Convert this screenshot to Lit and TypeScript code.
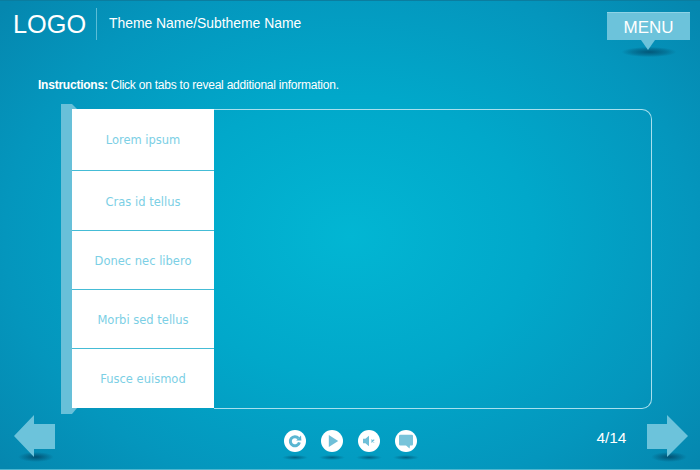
import { LitElement, html, css, svg } from "lit";
import { customElement } from "lit/decorators.js";

const TABS = ["Lorem ipsum", "Cras id tellus", "Donec nec libero", "Morbi sed tellus", "Fusce euismod"];

@customElement("app-root")
export class AppRoot extends LitElement {
  static styles = css`
    :host {
      display: block;
      width: 700px;
      height: 470px;
      font-family: "Liberation Sans", Arial, sans-serif;
      color: #fff;
    }
    .page {
      width: 700px;
      height: 470px;
      box-sizing: border-box;
      overflow: hidden;
      display: flex;
      flex-direction: column;
      background: radial-gradient(ellipse 460px 350px at 350px 235px, #02b6d3 0%, #01a8ca 40%, #0496bd 75%, #0587af 100%);
      border-top: 1px solid #0b7d9f;
      border-bottom: 1px solid #4fb6cf;
    }
    .header {
      height: 60px;
      flex: none;
      display: flex;
      align-items: flex-start;
      padding: 7px 10px 0 13px;
      box-sizing: border-box;
    }
    .logo {
      font-size: 25.3px;
      line-height: 32px;
      width: 83px;
      height: 32px;
      border-right: 1px solid #5cbdd6;
      flex: none;
    }
    .theme {
      font-size: 13.9px;
      line-height: 16px;
      margin: 7px 0 0 12px;
      flex: 1;
    }
    .menu {
      flex: none;
      margin-top: 4px;
      width: 83px;
      height: 28px;
      position: relative;
      background: #6cc3db;
      border-top: 1px solid #8ed3e6;
      box-sizing: border-box;
      text-align: center;
      font-size: 17px;
      line-height: 29px;
    }
    .menu::after {
      content: "";
      position: absolute;
      left: 34px;
      top: 27px;
      border-left: 7.5px solid transparent;
      border-right: 7.5px solid transparent;
      border-top: 10px solid #6cc3db;
    }
    .menu::before {
      content: "";
      position: absolute;
      left: 15px;
      top: 34px;
      width: 54px;
      height: 10px;
      background: radial-gradient(ellipse at center, rgba(0, 50, 80, .6) 0%, rgba(0, 60, 90, .3) 45%, rgba(0, 70, 100, 0) 72%);
    }
    .instructions {
      flex: none;
      margin: 17px 0 0 38px;
      height: 14px;
      font-size: 12px;
      letter-spacing: -0.23px;
      line-height: 14px;
    }
    .stage {
      flex: none;
      margin: 12px 0 0 61px;
      display: flex;
      align-items: flex-start;
      height: 310px;
    }
    .rail {
      flex: none;
      width: 16px;
      height: 310px;
      background: #68c0d9;
      clip-path: polygon(0 0, 11px 0, 16px 5px, 16px 304px, 11px 310px, 0 310px);
    }
    .tabs {
      flex: none;
      position: relative;
      margin: 5px 0 0 -5px;
      width: 142px;
      height: 299px;
      background: #fff;
      display: flex;
      flex-direction: column;
    }
    .panel {
      flex: none;
      margin-top: 5px;
      width: 438px;
      height: 300px;
      box-sizing: border-box;
      border: 1px solid #a8e0ee;
      border-left: none;
      border-radius: 0 10px 10px 0;
    }
    .tab {
      flex: none;
      display: flex;
      align-items: center;
      justify-content: center;
      color: #7ccfe5;
      font-family: "DejaVu Sans", sans-serif;
      font-size: 11.5px;
      border-bottom: 1px solid #45bcd6;
      box-sizing: border-box;
      height: 59px;
      padding-top: 2px;
    }
    .tab:first-child { height: 62px; padding-top: 0; }
    .tab:nth-child(2) { height: 60px; }
    .tab:last-child { border-bottom: none; height: 60px; padding-top: 0; }
    .footer {
      flex: none;
      margin-top: 1px;
      height: 53px;
      display: flex;
      align-items: flex-start;
      padding: 0 12px 0 14px;
      position: relative;
    }
    .arrow { flex: none; display: block; }
    .controls {
      flex: none;
      margin: 15px 0 0 228.5px;
      display: flex;
      gap: 15.3px;
    }
    .ctl {
      position: relative;
      width: 22px;
      height: 22px;
      display: block;
    }
    .ctl svg { display: block; }
    .ctl::after {
      content: "";
      position: absolute;
      left: -2px;
      top: 25px;
      width: 26px;
      height: 5px;
      background: radial-gradient(ellipse at center, rgba(0, 60, 90, .6) 0%, rgba(0, 70, 100, 0) 70%);
    }
    .count {
      flex: none;
      margin: 15px 0 0 179px;
      width: 50.5px;
      font-size: 15.4px;
      line-height: 16px;
    }
    .aw { position: relative; flex: none; width: 41px; height: 50px; }
    .aw::after {
      content: "";
      position: absolute;
      left: 4px;
      top: 37px;
      width: 36px;
      height: 10px;
      background: radial-gradient(ellipse at center, rgba(0, 50, 80, .65) 0%, rgba(0, 70, 100, 0) 70%);
    }
    .aw svg { position: relative; z-index: 1; }
  `;

  private icon(body: unknown) {
    return html`<span class="ctl"><svg width="22" height="22" viewBox="0 0 22 22"><circle cx="11" cy="11" r="11" fill="#fff"/>${body}</svg></span>`;
  }

  render() {
    return html`
      <div class="page">
        <div class="header">
          <div class="logo">LOGO</div>
          <div class="theme">Theme Name/Subtheme Name</div>
          <div class="menu">MENU</div>
        </div>
        <div class="instructions"><b>Instructions:</b> Click on tabs to reveal additional information.</div>
        <div class="stage">
          <div class="rail"></div>
          <div class="tabs">${TABS.map((t) => html`<div class="tab">${t}</div>`)}</div>
          <div class="panel"></div>
        </div>
        <div class="footer">
          <div class="aw"><svg class="arrow" width="41" height="43" viewBox="0 0 41 43"><path d="M0 21 L20 0 V9 H41 V34 H20 V42 Z" fill="#6cc3db"/></svg></div>
          <div class="controls">
            ${this.icon(svg`<path d="M14.4 8.2 A4.6 4.6 0 1 0 15.4 12.4" fill="none" stroke="#5ab6d2" stroke-width="3"/><path d="M12.2 10.4 L17.4 10.6 L17 5.6 Z" fill="#5ab6d2"/>`)}
            ${this.icon(svg`<path d="M7.8 5 L17.2 11 L7.8 17 Z" fill="#6fbfd8"/>`)}
            ${this.icon(svg`<path d="M5 8.8 H7.4 L11 5.8 V16.2 L7.4 13.2 H5 Z" fill="#6fbfd8"/><path d="M13.4 9.6 L16.2 12.4 M16.2 9.6 L13.4 12.4" stroke="#6fbfd8" stroke-width="1.3"/>`)}
            ${this.icon(svg`<path d="M5.2 4.8 H16.8 A1.2 1.2 0 0 1 18 6 V14.2 A1.2 1.2 0 0 1 16.8 15.4 H15 L14.6 18.6 L11 15.4 H5.2 A1.2 1.2 0 0 1 4 14.2 V6 A1.2 1.2 0 0 1 5.2 4.8 Z" fill="#78c4da"/>`)}
          </div>
          <div class="count">4/14</div>
          <div class="aw"><svg class="arrow" width="41" height="43" viewBox="0 0 41 43"><path d="M41 21 L20 0 V9 H0 V34 H20 V42 Z" fill="#6cc3db"/></svg></div>
        </div>
      </div>
    `;
  }
}
